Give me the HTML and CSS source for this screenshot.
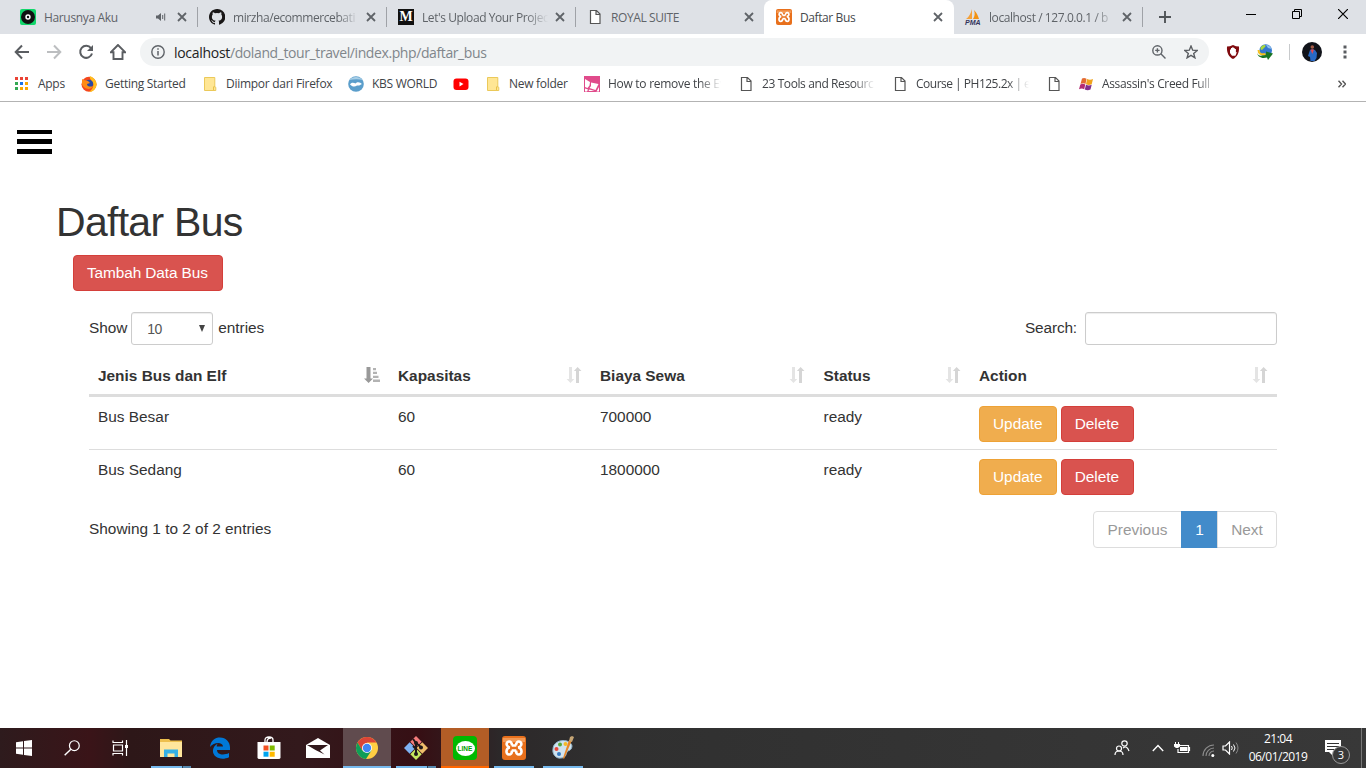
FILE: index.html
```html
<!DOCTYPE html>
<html lang="id">
<head>
<meta charset="utf-8">
<title>Daftar Bus</title>
<link rel="stylesheet" href="styles.css">
</head>
<body>
<svg class="defs" width="0" height="0">
  <symbol id="close" viewBox="0 0 10 10"><path d="M1 1l8 8M9 1l-8 8" stroke="#5f6368" stroke-width="1.8" fill="none"/></symbol>
  <symbol id="page" viewBox="0 0 16 16"><path d="M3.500 1.500h6l3.500 3.500v9.500h-9.500zM9 2v3.500h3.500" fill="#fff" stroke="#555" stroke-width="1.200"/></symbol>
  <symbol id="folder" viewBox="0 0 16 16"><path d="M2.500 1.500h10.300v9l1 .8v3.200H2.500z" fill="#ffe694" stroke="#ebc95a"/><path d="M11.500 14v-3.200h1.500" fill="none" stroke="#e8c24a"/></symbol>
  <symbol id="sort" viewBox="0 0 16 16"><path d="M3 0h3v12h2.300L4.500 16 .6 12H3z" fill="#e4e4e4"/><path d="M10 16h3V4h2.500L11.600 0 7.900 4H10z" fill="#d5d5d5"/></symbol>
  <symbol id="xampp" viewBox="0 0 24 24"><rect width="24" height="24" rx="3" fill="#e8701c"/><path d="M1 2h22v4H1z" fill="#f49a55"/><path d="M9.700 9.500H14.300M9.700 14.500H14.300M10 9.500C10 3.500 3.600 5.200 4.800 9c.4 1.400 1.500 2 3 2.500C3.600 12 3.500 18.500 7 18.500c2 0 3-1.500 3-4M14 9.500c0-6 6.400-4.300 5.200-.5-.4 1.400-1.500 2-3 2.500 4.200.5 4.300 7 .8 7-2 0-3-1.500-3-4" fill="none" stroke="#fff" stroke-width="2.600"/></symbol>
</svg>

<header class="browser">
  <div class="tabs">
    <div class="tab first-tab">
      <svg class="fav" viewBox="0 0 16 16"><rect width="16" height="16" rx="2" fill="#12d66b"/><circle cx="8" cy="8" r="7" fill="#111"/><circle cx="8" cy="8" r="2.700" fill="#fff"/><circle cx="8" cy="8" r="1.200" fill="#111"/></svg>
      <span class="tab-title">Harusnya Aku</span>
      <svg class="sound" width="10" height="10" viewBox="0 0 10 10"><path d="M0 3.500h2L5 1v8L2 6.500H0z" fill="#5f6368"/><path d="M6.700 3v4M8.700 1.500v7" stroke="#5f6368"/></svg>
      <svg class="x"><use href="#close"/></svg>
    </div>
    <div class="tab">
      <svg class="fav" viewBox="0 0 16 16"><path fill="#191717" d="M8 0C3.580 0 0 3.580 0 8c0 3.540 2.290 6.530 5.470 7.590.4.070.55-.17.55-.38V13.800c-2.230.49-2.700-.95-2.700-.95-.36-.9-.9-1.170-.9-1.170-.72-.5.060-.49.060-.49.800.060 1.230.83 1.230.83.720 1.220 1.870.87 2.330.66.070-.52.280-.87.500-1.070-1.780-.2-3.640-.89-3.640-3.950 0-.87.310-1.590.82-2.150-.08-.2-.36-1.020.08-2.120 0 0 .67-.21 2.200.82a7.600 7.600 0 0 1 4 0c1.530-1.040 2.200-.82 2.200-.82.440 1.100.160 1.920.080 2.120.510.560.820 1.270.820 2.150 0 3.070-1.870 3.750-3.650 3.950.290.250.540.730.540 1.480v2.200c0 .21.150.46.550.38A8 8 0 0 0 8 0z"/></svg>
      <span class="tab-title fade">mirzha/ecommercebati</span>
      <svg class="x"><use href="#close"/></svg>
    </div>
    <div class="tab">
      <span class="fav medium">M</span>
      <span class="tab-title fade">Let's Upload Your Projec</span>
      <svg class="x"><use href="#close"/></svg>
    </div>
    <div class="tab before-active">
      <svg class="fav"><use href="#page"/></svg>
      <span class="tab-title">ROYAL SUITE</span>
      <svg class="x"><use href="#close"/></svg>
    </div>
    <div class="tab active">
      <svg class="fav"><use href="#xampp"/></svg>
      <span class="tab-title">Daftar Bus</span>
      <svg class="x"><use href="#close"/></svg>
    </div>
    <div class="tab">
      <span class="fav pma"><svg width="16" height="11" viewBox="0 0 16 11"><path d="M7 0v10H1C4 8 6 4 7 0z" fill="#f4a13a"/><path d="M9 1c3 3 4 6 5 9H8C10 7 10 4 9 1z" fill="#f29111"/></svg><b>PMA</b></span>
      <span class="tab-title fade">localhost / 127.0.0.1 / b</span>
      <svg class="x"><use href="#close"/></svg>
    </div>
    <svg class="plus" width="12" height="12" viewBox="0 0 12 12"><path d="M6 0v12M0 6h12" stroke="#505458" stroke-width="1.900"/></svg>
    <div class="window-buttons">
      <svg width="10" height="10" viewBox="0 0 10 10"><path d="M0 5.500h10" stroke="#000"/></svg>
      <svg width="10" height="10" viewBox="0 0 10 10"><path d="M.5 2.500h7v7h-7zM2.500 2.500v-2h7v7h-2" fill="none" stroke="#000"/></svg>
      <svg width="10" height="10" viewBox="0 0 10 10"><path d="M0 0l10 10M10 0L0 10" stroke="#000" stroke-width="1.200"/></svg>
    </div>
  </div>

  <div class="toolbar">
    <svg class="nav" viewBox="0 0 16 16"><path d="M15 8H2M8 1.500L1.700 8 8 14.500" fill="none" stroke="#5a5d61" stroke-width="2"/></svg>
    <svg class="nav" viewBox="0 0 16 16"><path d="M1 8h13M8 1.500L14.300 8 8 14.500" fill="none" stroke="#bcbec0" stroke-width="2"/></svg>
    <svg class="nav" viewBox="0 0 16 16"><path d="M13 4.200A6 6 0 1 0 14 9.500" fill="none" stroke="#5a5d61" stroke-width="2"/><path d="M15 1v6H9z" fill="#5a5d61"/></svg>
    <svg class="nav home" viewBox="0 0 16 16"><path d="M8 1L1 8.200h2.500V15h9V8.200H15z" fill="none" stroke="#5a5d61" stroke-width="1.900"/></svg>
    <div class="omnibox">
      <svg width="14" height="14" viewBox="0 0 14 14"><circle cx="7" cy="7" r="6.200" fill="none" stroke="#5f6368" stroke-width="1.400"/><path d="M7 6v4.500M7 3.300v1.500" stroke="#5f6368" stroke-width="1.500"/></svg>
      <span class="url"><b>localhost</b>/doland_tour_travel/index.php/daftar_bus</span>
      <svg width="14" height="14" viewBox="0 0 14 14"><circle cx="5.400" cy="5.400" r="4.600" fill="none" stroke="#5f6368" stroke-width="1.400"/><path d="M8.800 8.800l4.700 4.700M3.200 5.400h4.400M5.400 3.200v4.400" stroke="#5f6368" stroke-width="1.400"/></svg>
      <svg class="star" width="14" height="14" viewBox="0 0 14 14"><path d="M7 1l1.700 4.200 4.500.3-3.500 2.900 1.200 4.400L7 10.400l-3.900 2.400 1.200-4.400L.8 5.500l4.500-.3z" fill="none" stroke="#5a5d61" stroke-width="1.400"/></svg>
    </div>
    <div class="extensions">
      <svg width="14" height="14" viewBox="0 0 14 14"><path d="M7 0c2 1 4 1.500 6 1.500C13.500 8 11 12 7 14 3 12 .5 8 1 1.500 3 1.500 5 1 7 0z" fill="#800b0f"/><path d="M4 8V4.500h1V3h1.200v-.7h1.300V3h1.200v1h1.200v3.500l1-.6-1.500 3.800H6z" fill="#fff"/></svg>
      <svg class="idm" width="16" height="16" viewBox="0 0 16 16"><circle cx="8.700" cy="6.500" r="6.300" fill="#3478cf"/><path d="M5 2c2-2 5-1 3 1L5 6C3 6 3 3 5 2z" fill="#a9d83b"/><path d="M9 1c3 0 5 2 5.500 4L11 4z" fill="#8fc0ee"/><path d="M0 8c0 5 6 4 9 2V7.500l7 2-5 6.500-1-2.500C5 15 0 13 0 8z" fill="#187524"/><path d="M1.500 6c0 4 3 5 7 4" stroke="#f5c11e" stroke-width="2" fill="none"/></svg>
      <i class="divider"></i>
      <svg width="20" height="20" viewBox="0 0 20 20"><circle cx="10" cy="10" r="10" fill="#11131a"/><circle cx="10.300" cy="5" r="1.800" fill="#a65d48"/><path d="M8 8l2.300-.8L13 8l2 3-.5 5-2 3h-4l-.5-4-2-1z" fill="#2869c5"/><path d="M8.500 7.500h3.500L10.300 12z" fill="#e34850"/></svg>
      <svg class="dots" width="4" height="14" viewBox="0 0 4 14"><path d="M.5.500h3v3h-3zM.5 5.500h3v3h-3zM.5 10.500h3v3h-3z" fill="#5a5d61"/></svg>
    </div>
  </div>

  <nav class="bookmarks">
    <span class="bm"><svg viewBox="0 0 16 16"><path d="M1 1h3v3H1zM6 1h3v3H6zM11 1h3v3h-3z" fill="#ea4335"/><path d="M1 6h3v3H1z" fill="#34a853"/><path d="M6 6h3v3H6z" fill="#1a73e8"/><path d="M11 6h3v3h-3zM6 11h3v3H6zM11 11h3v3h-3z" fill="#fba800"/><path d="M1 11h3v3H1z" fill="#34a853"/></svg><span>Apps</span></span>
    <span class="bm"><svg viewBox="0 0 16 16"><circle cx="8" cy="8.300" r="7.500" fill="#f5471d"/><path d="M9 0c5 2 8 7 6 11-1 3-4 5-7 5 4-3 5-6 4-9S8 3 9 0z" fill="#ffbd1f"/><circle cx="8" cy="8" r="4.200" fill="#2749a5"/><path d="M1 3l2 1 4 1 2 2-3 1c0 3 4 3 6 2-2 5-10 3-11-2z" fill="#ff8b13"/></svg><span>Getting Started</span></span>
    <span class="bm"><svg><use href="#folder"/></svg><span>Diimpor dari Firefox</span></span>
    <span class="bm"><svg viewBox="0 0 16 16"><circle cx="8" cy="8" r="7.800" fill="#5b9ecb"/><path d="M1 4c4-4 10-4 14 0-4-1-9-1-14 0z" fill="#a9cfe7"/><path d="M2 8.500c1-2.500 4-2 5.500-1 2-2.500 5-1 6.500.5-2 .5-2 2-5 1.500-2.500 2-5 1-7-1z" fill="#fff"/></svg><span>KBS WORLD</span></span>
    <span class="bm"><svg viewBox="0 0 16 16"><rect x=".5" y="2.500" width="15" height="11.500" rx="3" fill="#f00"/><path d="M6.500 5.800v4.600l4-2.300z" fill="#fff"/></svg></span>
    <span class="bm"><svg><use href="#folder"/></svg><span>New folder</span></span>
    <span class="bm"><svg viewBox="0 0 16 16"><path d="M0 0h16v16H0z" fill="#e04b8b"/><path d="M1 3l5 3-.5 3.500L3.500 12 1 11zM7 6.500l7.500 1.500-3 6-6-2 1.500-2zM1 12.500l3 1-1 2H1zM15 11v4.500h-2.500zM5.500 13.500l5 1.500H4.500z" fill="#fff"/></svg><span class="fade f1">How to remove the Ev</span></span>
    <span class="bm"><svg><use href="#page"/></svg><span class="fade f2">23 Tools and Resourc</span></span>
    <span class="bm"><svg><use href="#page"/></svg><span class="fade f2 course">Course | PH125.2x | e</span></span>
    <span class="bm"><svg><use href="#page"/></svg></span>
    <span class="bm"><svg viewBox="0 0 16 16"><path d="M4 2.500c2-1 3-.5 4.500.3L7.500 8C6 7 4.500 7 2.500 8z" fill="#e36b32"/><path d="M9 3c2 1 4 1 6 0l-1.300 5.200c-2 1-3.700 1-5.700 0z" fill="#f0a31d"/><path d="M2.300 8.500c2-1 3.200-1 5 0L6.200 13.300c-1.700-1-3.200-1-5.200 0z" fill="#b32b73"/><path d="M8 8.700c2 1 3.700 1 5.700 0l-1.200 4.800c-2 1-3.700 1-5.700 0z" fill="#83308d"/></svg><span class="fade f3">Assassin's Creed Full</span></span>
    <svg class="more" width="8" height="8" viewBox="0 0 8 8"><path d="M.5.800L3.500 4l-3 3.200M4.500.800L7.500 4l-3 3.200" fill="none" stroke="#555" stroke-width="1.400"/></svg>
  </nav>
</header>

<main class="content">
  <div class="menu"><i></i><i></i><i></i></div>
  <h1>Daftar Bus</h1>
  <a class="btn danger add">Tambah Data Bus</a>
  <section class="datatable">
    <div class="controls">
      <label class="length"><span class="cap">Show</span><span class="select"><span>10</span><svg width="6" height="7" viewBox="0 0 6 7"><path d="M0 0h6L3 7z" fill="#444"/></svg></span><span class="cap">entries</span></label>
      <label class="search"><span class="cap">Search:</span><input type="text"></label>
    </div>
    <table>
      <colgroup><col class="c1"><col class="c2"><col class="c3"><col class="c4"><col></colgroup>
      <thead><tr>
        <th><div><span>Jenis Bus dan Elf</span><svg viewBox="0 0 16 16"><path d="M2.500 0h4v11.500H9L4.600 16 0 11.500h2.500z" fill="#999"/><path d="M9 1h3v2.200H9zM9 4.800h4V7H9zM9 8.800h5.500V11H9zM9 12.600h7v2.400H9z" fill="#b3b3b3"/></svg></div></th>
        <th><div><span>Kapasitas</span><svg><use href="#sort"/></svg></div></th>
        <th><div><span>Biaya Sewa</span><svg><use href="#sort"/></svg></div></th>
        <th><div><span>Status</span><svg><use href="#sort"/></svg></div></th>
        <th><div><span>Action</span><svg><use href="#sort"/></svg></div></th>
      </tr></thead>
      <tbody>
        <tr><td>Bus Besar</td><td>60</td><td>700000</td><td>ready</td><td><div class="actions"><a class="btn warning">Update</a><a class="btn danger delete">Delete</a></div></td></tr>
        <tr><td>Bus Sedang</td><td>60</td><td>1800000</td><td>ready</td><td><div class="actions"><a class="btn warning">Update</a><a class="btn danger delete">Delete</a></div></td></tr>
      </tbody>
    </table>
    <div class="table-footer">
      <span class="cap">Showing 1 to 2 of 2 entries</span>
      <div class="pagination"><a class="prev">Previous</a><a class="current">1</a><a class="next">Next</a></div>
    </div>
  </section>
</main>

<footer class="taskbar">
  <span class="sys"><svg width="16" height="16" viewBox="0 0 16 16"><path d="M0 2.200L7 1.200v6.300H0zM8 1l8-1v7.500H8zM0 8.500h7v6.300l-7-1zM8 8.500h8V16l-8-1z" fill="#fff"/></svg></span>
  <span class="sys"><svg width="16" height="16" viewBox="0 0 17 17"><circle cx="11" cy="6" r="5.200" fill="none" stroke="#fff" stroke-width="1.300"/><path d="M7.300 9.700L.7 16.300" stroke="#fff" stroke-width="1.500"/></svg></span>
  <span class="sys"><svg width="17" height="16" viewBox="0 0 17 16"><path d="M1 .5v2h9.500v-2M1 15.500v-2h9.500v2M1.500 5h9v6h-9zM14.500 0v16" fill="none" stroke="#fff" stroke-width="1.200"/><path d="M13 5h3v3h-3z" fill="#fff"/></svg></span>
  <span class="app open stacked first"><svg width="24" height="24" viewBox="0 0 24 24"><path d="M1 3h9l1.500 1.500H23V21H1z" fill="#edbf4d"/><path d="M1 6h22v15H1z" fill="#ffe69c"/><path d="M5 21v-7.500h14V21h-3.500v-3.500h-7V21z" fill="#35b0e6"/></svg></span>
  <span class="app"><svg width="22" height="22" viewBox="0 0 22 22"><path d="M1 10C2 3 6 .5 11 .5c6 0 10 4.500 10 10V13H8c0 5 7 5.500 12 3v4.200C12 24 3 20 4 13c.4-3 2-5 5-6.500-1 1-1.200 2.200-1.300 3H14C14 5 5 4.500 1 10z" fill="#0078d7"/></svg></span>
  <span class="app"><svg width="24" height="24" viewBox="0 0 24 24"><path d="M.5 6h23v15.500q0 1.500-2 1.500h-19q-2 0-2-1.500z" fill="#fff"/><path d="M8 7V4q0-3 4-3t4 3v3M10 6q0-4 4-4" fill="none" stroke="#fff" stroke-width="1.300"/><path d="M6.500 9.500h5v5h-5z" fill="#f25022"/><path d="M12.700 9.500h5v5h-5z" fill="#7fba00"/><path d="M6.500 15.700h5v5h-5z" fill="#00a4ef"/><path d="M12.700 15.700h5v5h-5z" fill="#ffb900"/></svg></span>
  <span class="app"><svg width="24" height="20" viewBox="0 0 24 20"><path d="M0 7L12 0l12 7v13H0z" fill="#fff"/><path d="M1 7h21l-8 5.500 4.500 4-9-4.500z" fill="#32191c"/></svg></span>
  <span class="app open focused"><svg width="22" height="22" viewBox="0 0 22 22"><circle cx="11" cy="11" r="11" fill="#ffce43"/><path d="M1.500 5.500A11 11 0 0 1 20.500 5.500H11L6.200 13.700z" fill="#db4437"/><path d="M1.500 5.500A11 11 0 0 0 10 22l5.500-8.500H6.200z" fill="#0f9d58"/><circle cx="11" cy="11" r="5" fill="#fff"/><circle cx="11" cy="11" r="4.200" fill="#4285f4"/></svg></span>
  <span class="app open stacked"><svg width="24" height="24" viewBox="0 0 24 24"><path d="M12 0l5.700 5.700L12 11.400 6.300 5.700z" fill="#f37b7b"/><path d="M5.700 6.300l5.700 5.700-5.700 5.700L0 12z" fill="#7eb2f4"/><path d="M18.300 6.300L24 12l-5.700 5.700-5.700-5.700z" fill="#efbd6b"/><path d="M12 12.600l5.700 5.700L12 24l-5.700-5.700z" fill="#c5e85e"/><path d="M9 3l3 4v12M12 7l6 5M12 13l-3-3" fill="none" stroke="#1f1719" stroke-width="2"/><circle cx="12" cy="7" r="2" fill="#1f1719"/><circle cx="17" cy="11.500" r="2" fill="#1f1719"/><circle cx="12" cy="18" r="2" fill="#1f1719"/></svg></span>
  <span class="app line-app"><span class="line-icon"><span>LINE</span></span></span>
  <span class="app open"><svg width="24" height="24"><use href="#xampp"/></svg></span>
  <span class="app open"><svg width="24" height="24" viewBox="0 0 24 24"><path d="M2 13C2 7 9 3 16 5c5 2 6 5 4 8-1 2-3 1-4 3s-1 6-6 6c-5 1-9-4-8-9z" fill="#cfe3ef" stroke="#8fb2c9"/><circle cx="5.500" cy="13" r="2" fill="#e74639"/><circle cx="9" cy="8.500" r="2" fill="#55a83d"/><circle cx="14.500" cy="8" r="2" fill="#f6ba26"/><circle cx="8" cy="18" r="2" fill="#347ac3"/><path d="M21 4l-8 19-1-1 6-18z" fill="#e98727"/><path d="M18 5l1-4 2-1 2 1-2 5z" fill="#c5a575"/></svg></span>
  <div class="tray">
    <svg class="people" width="16" height="16" viewBox="0 0 16 16"><g fill="none" stroke="#fff" stroke-width="1.200"><circle cx="10.500" cy="3.500" r="2.700"/><circle cx="5" cy="8.500" r="2.500"/><path d="M9 8q4-3 6 3M1 15q0-4 4-4t4 4"/></g></svg>
    <svg class="chev" width="12" height="8" viewBox="0 0 12 8"><path d="M.8 7L6 1.500 11.200 7" fill="none" stroke="#fff" stroke-width="1.400"/></svg>
    <svg class="battery" width="17" height="12" viewBox="0 0 17 12"><path d="M5.500 3.500h9v7H4V7M15.500 5v4" fill="none" stroke="#fff" stroke-width="1.200"/><path d="M6 5h7.500v4H6zM0 2h6v2.500L4 6H2L0 4.500zM1 0h1v2H1zM4 0h1v2H4z" fill="#fff"/></svg>
    <svg class="wifi" width="13" height="13" viewBox="0 0 13 13"><g fill="none" stroke="#8c8c8c" stroke-width="1.100"><path d="M1 12A11 11 0 0 1 12 1M4 12a8 8 0 0 1 8-8M7 12a5 5 0 0 1 5-5"/></g><circle cx="10.800" cy="11.500" r="1.500" fill="#fff"/></svg>
    <svg class="volume" width="17" height="14" viewBox="0 0 17 14"><path d="M1 5h2.500l4-4v12l-4-4H1z" fill="none" stroke="#fff" stroke-width="1.200"/><path d="M9.500 5q1.500 2 0 4M11.500 3.500q3 3.500 0 7" fill="none" stroke="#fff"/><path d="M14 1.500q4 5.500 0 11" fill="none" stroke="#888"/></svg>
    <div class="clock"><span>21:04</span><span>06/01/2019</span></div>
    <div class="notice"><svg width="16" height="17" viewBox="0 0 16 17"><path d="M0 0h16v12H8v4l-4-4H0z" fill="#fff"/><path d="M2 3.500h12M2 6.500h12M2 9.500h9" stroke="#333"/></svg><span>3</span></div>
  </div>
</footer>
</body>
</html>
```
FILE: styles.css
```css
* { box-sizing: border-box; }
body { margin: 0; width: 1366px; height: 768px; overflow: hidden; display: flex; flex-direction: column; background: #fff; color: #333; font: 15.4px "Liberation Sans", Arial, sans-serif; }
svg { display: block; flex: none; }
.defs { position: absolute; }

.browser { height: 102px; flex: none; border-bottom: 1px solid #b3b3b3; font: 12px "Open Sans", "Noto Sans", sans-serif; letter-spacing: -.28px; }
.tabs { height: 34px; background: #dee1e6; display: flex; padding-left: 8px; align-items: center; }
.tab { width: 189px; height: 34px; flex: none; display: flex; align-items: center; padding: 0 11px; color: #5f6368; background: linear-gradient(#9fa2a7, #9fa2a7) right 0 top 7px / 1px 20px no-repeat; }
.first-tab { width: 190px; padding-left: 12px; letter-spacing: -.35px; }
.tab.before-active { width: 188px; padding-right: 10px; background: #dee1e6; border-bottom-right-radius: 8px; letter-spacing: -.4px; position: relative; }
.tab.active { width: 190px; padding-left: 12px; background: #fff; color: #45484c; border-radius: 8px 8px 0 0; letter-spacing: -.4px; }
.fav { width: 16px; height: 16px; margin-right: 8px; flex: none; }
.medium { background: #111; color: #fff; font: bold 14px/16px "Liberation Serif", serif; text-align: center; letter-spacing: 0; }
.pma b { display: block; font: italic bold 7px/5px "Liberation Sans", sans-serif; color: #33335c; letter-spacing: 0; }
.tab-title { flex: 1; white-space: nowrap; }
.fade { white-space: nowrap; -webkit-mask-image: linear-gradient(to right, #000 calc(100% - 22px), transparent); mask-image: linear-gradient(to right, #000 calc(100% - 22px), transparent); }
.tab .fade { flex: none; width: 126px; margin-right: auto; letter-spacing: -.42px; }
.x { width: 10px; height: 10px; }
.sound { margin-right: 11px; }
.plus { margin-left: 16px; }
.window-buttons { display: flex; gap: 36px; margin: -6px 18px 0 auto; }

.toolbar { height: 36px; display: flex; align-items: center; padding-left: 14px; background: #fff; }
.nav { width: 16px; height: 16px; margin-right: 16px; }
.nav.home { margin-right: 14px; }
.omnibox { width: 1069px; height: 28px; background: #f1f3f4; border-radius: 14px; padding: 0 11px; display: flex; align-items: center; }
.url { flex: 1; margin-left: 9px; color: #80868b; font-size: 14px; letter-spacing: -.4px; }
.url b { color: #222; font-weight: 400; letter-spacing: -.3px; }
.star { margin-left: 18px; }
.extensions { display: flex; align-items: center; margin-left: 17px; }
.idm { margin-left: 17px; }
.divider { width: 1px; height: 16px; background: #c8cacc; margin: 0 12px 0 16px; }
.dots { margin-left: 21px; }

.bookmarks { height: 28px; display: grid; grid-template-columns: 67px 121px 146px 105px 32px 99px 154px 154px 154px 32px 260px 8px; padding: 0 0 1px 14px; align-items: center; color: #404347; }
.bm { display: flex; align-items: center; gap: 8px; white-space: nowrap; }
.bm svg { width: 16px; height: 16px; }
.f1, .f2, .f3 { width: 113px; }
.f2 { letter-spacing: -.4px; }
.course { letter-spacing: -.5px; }
.f3 { width: 116px; letter-spacing: -.35px; }

.content { flex: 1; padding: 28px 89px 0 17px; }
.menu { display: grid; gap: 5px; width: 35px; }
.menu i { height: 5px; background: #000; }
.menu i:first-child { height: 4px; }
h1 { font-size: 41px; line-height: 44px; font-weight: 400; margin: 46px 0 11px 39px; letter-spacing: -.72px; }
.btn { display: inline-block; height: 36px; line-height: 34px; padding: 0 13px; border: 1px solid; border-radius: 4px; color: #fff; white-space: nowrap; }
.danger { background: #d9534f; border-color: #d43f3a; }
.warning { background: #f0ad4e; border-color: #eea236; }
.delete { width: 73px; }
.add { display: block; width: 150px; margin-left: 56px; letter-spacing: -.1px; }
.datatable { margin: 21px 0 0 72px; width: 1188px; }
.controls { display: flex; justify-content: space-between; height: 33px; }
.length, .search { display: flex; align-items: center; }
.cap { padding-bottom: 2px; }
.length .cap { letter-spacing: -.05px; }
.select { width: 82px; height: 33px; margin: 0 5px 0 4px; border: 1px solid #ccc; border-radius: 3px; padding: 0 7px 0 15px; display: flex; align-items: center; justify-content: space-between; font-size: 14px; letter-spacing: -.7px; color: #555; box-shadow: inset 0 1px 1px rgba(0,0,0,.075); }
.search { gap: 8px; letter-spacing: -.15px; }
.search input { width: 192px; height: 33px; margin: 0; border: 1px solid #ccc; border-radius: 3px; box-shadow: inset 0 1px 1px rgba(0,0,0,.075); }
table { width: 100%; table-layout: fixed; border-collapse: separate; border-spacing: 0; margin-top: 12px; }
.c1 { width: 300px; } .c2 { width: 202px; } .c3 { width: 223.500px; } .c4 { width: 155.500px; }
th { height: 40px; padding: 0 9px 2px; border-bottom: 3px solid #ddd; text-align: left; }
th:nth-child(3) { padding-right: 10px; }
th div { display: flex; justify-content: space-between; align-items: center; }
th span { padding-top: 2px; }
th svg { width: 16px; height: 16px; }
td { height: 53px; padding: 9px 9px 0; vertical-align: top; line-height: 22px; }
tbody tr:first-child td { border-bottom: 1px solid #ddd; }
.actions { display: flex; gap: 4px; }
.table-footer { display: flex; justify-content: space-between; align-items: center; height: 37px; margin-top: 8px; }
.pagination { display: flex; line-height: 35px; color: #999; }
.pagination a { height: 37px; border: 1px solid #ddd; text-align: center; }
.prev { width: 89px; border-radius: 4px 0 0 4px; }
.pagination .current { width: 37px; background: #428bca; border-color: #428bca; color: #fff; margin-left: -1px; }
.next { width: 60px; border-radius: 0 4px 4px 0; margin-left: -1px; }

.taskbar { height: 40px; flex: none; display: flex; background: linear-gradient(90deg, #2e1b1d 0, #3a1418 90px, #2d1718 130px, #33191c 300px, #360f14 420px, #2c2829 500px, #303030 620px, #383838 100%); color: #fff; font-family: "Open Sans", "Noto Sans", sans-serif; }
.sys, .app { width: 48px; height: 40px; display: flex; align-items: center; justify-content: center; flex: none; }
.app { width: 49px; }
.first { margin-left: 2px; }
.open { background: linear-gradient(#76b9ed, #76b9ed) center bottom / 40px 2px no-repeat; }
.stacked { background: linear-gradient(90deg, #76b9ed 31px, #2c3f50 31px, #2c3f50 32px, #5688ae 32px) center bottom / 40px 2px no-repeat; }
.focused { background: linear-gradient(#76b9ed, #76b9ed) bottom / 100% 2px no-repeat, #604b4e; width: 48px; margin: 0 0 0 1px; }
.line-app { background: #b35d26; border-bottom: 2px solid #f60; padding-top: 2px; width: 48px; margin: 0 0 0 1px; }
.line-icon { width: 24px; height: 24px; border-radius: 4px; background: #00b900; display: flex; justify-content: center; align-items: center; }
.line-icon span { width: 19px; height: 15px; border-radius: 50%; background: #fff; color: #00a000; font: bold 6.500px/15px "Liberation Sans", sans-serif; text-align: center; }
.tray { margin-left: auto; display: flex; align-items: center; padding-right: 4px; }
.chev { margin-left: 22px; }
.battery { margin-left: 10px; }
.wifi { margin: 4px 0 0 11px; }
.volume { margin-left: 7px; }
.clock { width: 70px; margin-left: 4px; display: flex; flex-direction: column; align-items: center; font-size: 12px; line-height: 18px; letter-spacing: -.5px; }
.notice { position: relative; width: 40px; height: 40px; margin-left: 9px; padding: 12px 0 0 3px; border-right: 1px solid #777; }
.notice span { position: absolute; left: 10px; top: 18px; width: 18px; height: 18px; border: 1px solid #999; border-radius: 50%; background: #383838; font-size: 11px; line-height: 16px; text-align: center; }
```
